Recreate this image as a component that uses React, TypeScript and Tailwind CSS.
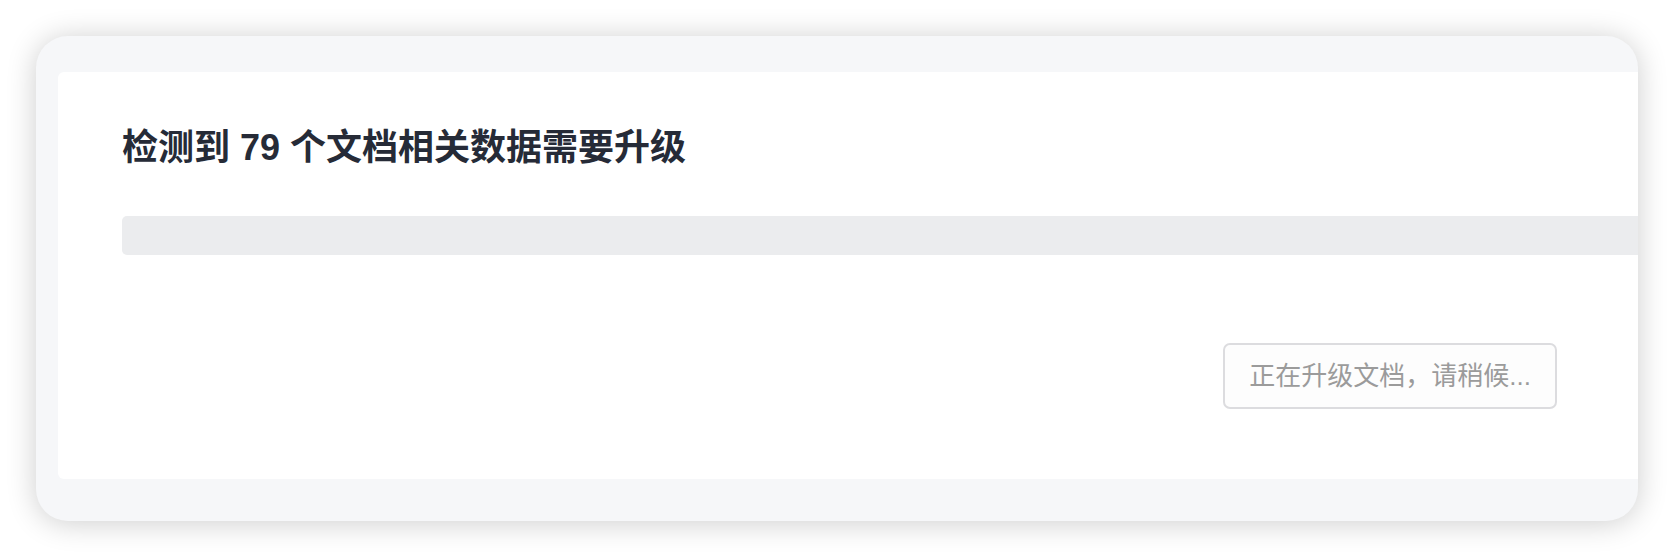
const font = { fontFamily: '"Liberation Sans", "Noto Sans CJK SC", sans-serif' }

export default function App() {
  return (
    <div className="w-[1674px] h-[558px] bg-white p-9" style={font}>
      {/* Outer dialog shell */}
      <div className="h-[485px] rounded-[32px] bg-[#f6f7f9] overflow-hidden shadow-[0_2px_30px_rgba(0,0,0,0.2)] pl-[22px] pt-9">
        {/* Inner panel, runs past the right edge */}
        <div className="w-[1640px] h-[407px] bg-white rounded-l-[6px] pl-16 pt-[54px]">
          <h2 className="text-[36px] leading-[44px] font-bold text-[#262b37]">
            检测到 79 个文档相关数据需要升级
          </h2>

          {/* Progress track */}
          <div className="mt-[46px] h-[39px] bg-[#ebecee] rounded-l-[5px]" />

          <div className="mt-[88px] flex justify-end pr-[141px]">
            <button
              disabled
              className="h-[66px] px-6 border-2 border-[#dcdcdf] rounded-[7px] bg-[#fdfdfd] text-[26px] text-[#9b9b9b]"
            >
              正在升级文档，请稍候...
            </button>
          </div>
        </div>
      </div>
    </div>
  )
}
